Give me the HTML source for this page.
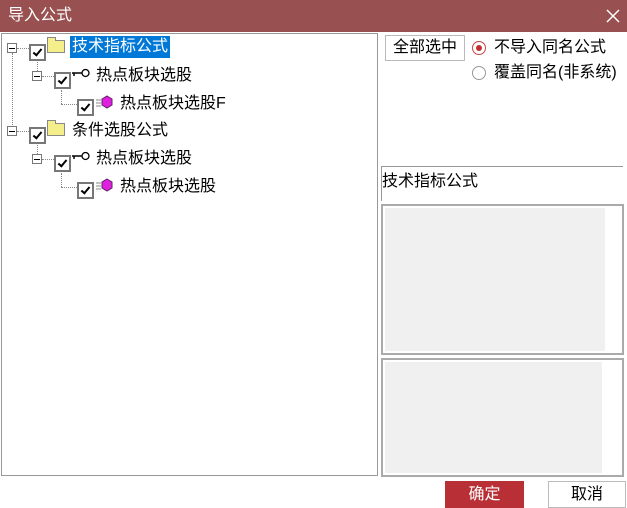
<!DOCTYPE html><html><head><meta charset="utf-8"><style>
body{margin:0;width:627px;height:508px;background:#fff;position:relative;overflow:hidden;font-family:"Liberation Sans","Noto Sans CJK SC",sans-serif;font-size:15px;color:#000}
.a{position:absolute}
.title{left:0;top:0;width:627px;height:32px;background:#985050;color:#fff;font-size:16px;line-height:32px}
.exp{width:8px;height:8px;border:1px solid #777;background:#fff}
.exp:after{content:"";position:absolute;left:1px;top:3.5px;width:6px;height:1px;background:#000}
.cb{width:13px;height:13px;border:2px solid #777;background:#fff}
.cb:after{content:"";position:absolute;left:4px;top:1px;width:3px;height:7px;border:solid #000;border-width:0 2px 2px 0;transform:rotate(40deg)}
.dv{border-left:1px dotted #888;width:0}
.dh{border-top:1px dotted #888;height:0}
.fold{width:16px;height:11px;background:#f4ef8a;border:1px solid #888}
.fold:before{content:"";position:absolute;left:-1px;top:-4px;width:7px;height:3px;background:#f4ef8a;border:1px solid #888;border-bottom:none}
.t{line-height:20px;white-space:nowrap;font-size:16px}
.rad{width:12px;height:12px;border:1px solid #999;border-radius:50%;background:#fff}
.box{border:2px solid #aaa;box-sizing:border-box}
</style></head><body>
<div class="a title"><span style="margin-left:8px">导入公式</span><svg class="a" style="right:7px;top:9px" width="14" height="14"><path d="M1 1L13 13M13 1L1 13" stroke="#fff" stroke-width="1.5"/></svg></div>
<div class="a" style="left:1px;top:33px;width:377px;height:443px;border:1px solid #999;box-sizing:border-box"></div>
<div class="a dv" style="left:12px;top:53px;height:78px"></div>
<div class="a dh" style="left:17px;top:48px;width:12px"></div>
<div class="a dh" style="left:17px;top:131px;width:12px"></div>
<div class="a dv" style="left:37px;top:62px;height:13px"></div>
<div class="a dv" style="left:37px;top:145px;height:13px"></div>
<div class="a dh" style="left:42px;top:76px;width:12px"></div>
<div class="a dh" style="left:42px;top:159px;width:12px"></div>
<div class="a dv" style="left:61px;top:90px;height:14px"></div>
<div class="a dh" style="left:61px;top:104px;width:16px"></div>
<div class="a dv" style="left:61px;top:173px;height:14px"></div>
<div class="a dh" style="left:61px;top:187px;width:16px"></div>
<div class="a exp" style="left:7px;top:43px"></div>
<div class="a cb" style="left:29px;top:44px"></div>
<div class="a fold" style="left:47px;top:40px"></div>
<div class="a t" style="left:70px;top:36px;height:22px;line-height:22px;background:#0078d7;color:#fff;padding:0 2px">技术指标公式</div>
<div class="a exp" style="left:32px;top:71px"></div>
<div class="a cb" style="left:54px;top:72px"></div>
<svg class="a" style="left:71px;top:68px" width="20" height="12"><path d="M1 5H11M3 5V8" stroke="#000" stroke-width="1.5"/><circle cx="14.5" cy="5" r="3.5" fill="#fff" stroke="#000" stroke-width="1.3"/></svg>
<div class="a t" style="left:96px;top:66px">热点板块选股</div>
<div class="a cb" style="left:77px;top:99px"></div>
<svg class="a" style="left:95px;top:95px" width="20" height="14"><path d="M1 5H6M1 8H6M1 11H6" stroke="#888"/><path d="M12 1L17 4L17 10L12 13L7 10L7 4Z" fill="#e020e0" stroke="#602060"/></svg>
<div class="a t" style="left:120px;top:94px">热点板块选股F</div>
<div class="a exp" style="left:7px;top:126px"></div>
<div class="a cb" style="left:29px;top:127px"></div>
<div class="a fold" style="left:47px;top:123px"></div>
<div class="a t" style="left:72px;top:121px">条件选股公式</div>
<div class="a exp" style="left:32px;top:154px"></div>
<div class="a cb" style="left:54px;top:155px"></div>
<svg class="a" style="left:71px;top:151px" width="20" height="12"><path d="M1 5H11M3 5V8" stroke="#000" stroke-width="1.5"/><circle cx="14.5" cy="5" r="3.5" fill="#fff" stroke="#000" stroke-width="1.3"/></svg>
<div class="a t" style="left:96px;top:149px">热点板块选股</div>
<div class="a cb" style="left:77px;top:182px"></div>
<svg class="a" style="left:95px;top:178px" width="20" height="14"><path d="M1 5H6M1 8H6M1 11H6" stroke="#888"/><path d="M12 1L17 4L17 10L12 13L7 10L7 4Z" fill="#e020e0" stroke="#602060"/></svg>
<div class="a t" style="left:120px;top:177px">热点板块选股</div>
<div class="a" style="left:385px;top:35px;width:80px;height:26px;border:1px solid #bbb;box-sizing:border-box;background:#fff;text-align:center;line-height:24px;font-size:16px">全部选中</div>
<div class="a rad" style="left:472px;top:41px;border-color:#c44"></div>
<div class="a" style="left:476px;top:45px;width:6px;height:6px;border-radius:50%;background:#c03030"></div>
<div class="a t" style="left:494px;top:38px">不导入同名公式</div>
<div class="a rad" style="left:472px;top:66px"></div>
<div class="a t" style="left:494px;top:63px">覆盖同名(非系统)</div>
<div class="a" style="left:381px;top:166px;width:242px;height:1px;background:#999"></div>
<div class="a" style="left:381px;top:166px;width:1px;height:35px;background:#999"></div>
<div class="a t" style="left:382px;top:172px">技术指标公式</div>
<div class="a box" style="left:381px;top:204px;width:243px;height:151px"><div style="margin:2px;width:220px;height:143px;background:#f0f0f0"></div></div>
<div class="a box" style="left:381px;top:358px;width:243px;height:119px"><div style="margin:2px;width:217px;height:111px;background:#f0f0f0"></div></div>
<div class="a" style="left:445px;top:481px;width:79px;height:27px;background:#b83035;color:#fff;text-align:center;line-height:27px;font-size:16px">确定</div>
<div class="a" style="left:548px;top:481px;width:78px;height:27px;border:1px solid #bbb;box-sizing:border-box;text-align:center;line-height:25px;font-size:16px">取消</div>
</body></html>
